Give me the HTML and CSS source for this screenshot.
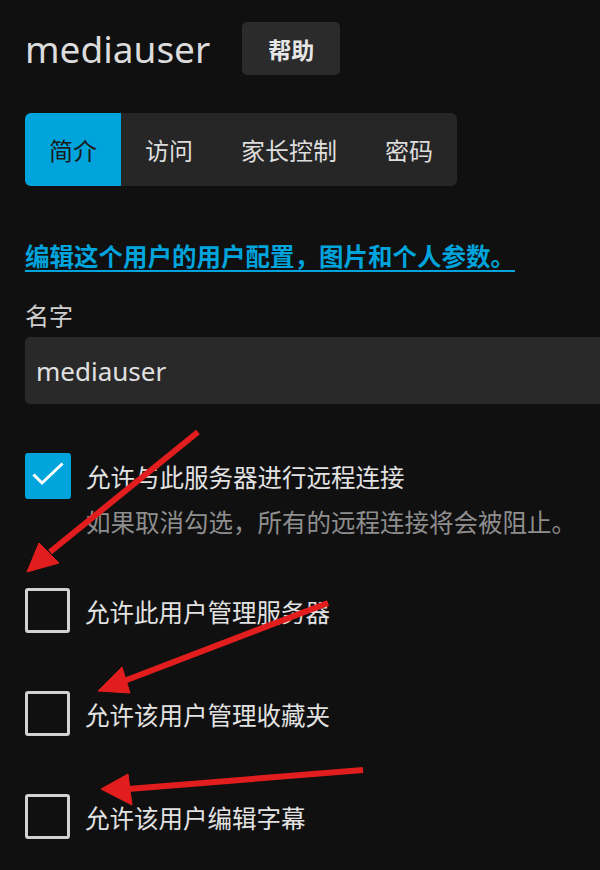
FILE: index.html
```html
<!DOCTYPE html>
<html lang="zh-CN">
<head>
<meta charset="utf-8">
<title>mediauser</title>
<link rel="stylesheet" href="styles.css">
</head>
<body>
<div class="page">
  <div class="header">
    <h1 class="title">mediauser</h1>
    <button class="help-btn">帮助</button>
  </div>
  <div class="tabs">
    <div class="tab active">简介</div>
    <div class="tab">访问</div>
    <div class="tab">家长控制</div>
    <div class="tab">密码</div>
  </div>
  <a class="profile-link" href="#">编辑这个用户的用户配置，图片和个人参数。</a>
  <div class="field-label">名字</div>
  <div class="input">mediauser</div>

  <div class="check-row first">
    <span class="box checked">
      <svg width="46" height="46" viewBox="0 0 46 46"><path d="M9.5 22.5 L17 30 L36.5 11.5" fill="none" stroke="#fff" stroke-width="3" stroke-linecap="square"/></svg>
    </span>
    <span class="check-label">允许与此服务器进行远程连接</span>
  </div>
  <div class="desc">如果取消勾选，所有的远程连接将会被阻止。</div>

  <div class="check-row second">
    <span class="box"></span>
    <span class="check-label">允许此用户管理服务器</span>
  </div>
  <div class="check-row">
    <span class="box"></span>
    <span class="check-label">允许该用户管理收藏夹</span>
  </div>
  <div class="check-row">
    <span class="box"></span>
    <span class="check-label">允许该用户编辑字幕</span>
  </div>
</div>

<svg class="arrows" width="600" height="870" viewBox="0 0 600 870">
  <g fill="#e21d1d" stroke="#e21d1d">
    <line x1="198" y1="432" x2="50" y2="552" stroke-width="6"/>
    <polygon points="27,572 39,543 59,563" stroke-width="1"/>
    <line x1="328" y1="603" x2="124" y2="681" stroke-width="6"/>
    <polygon points="98,691 122,667 130,693" stroke-width="1"/>
    <line x1="363" y1="770" x2="128" y2="789" stroke-width="6"/>
    <polygon points="101,789 128,774 132,805" stroke-width="1"/>
  </g>
</svg>
</body>
</html>
```
FILE: styles.css
```css
html, body {
  margin: 0;
  padding: 0;
  background: #101010;
  overflow: hidden;
}
body {
  width: 600px;
  height: 870px;
  position: relative;
  font-family: "Noto Sans", "Noto Sans CJK SC", sans-serif;
  color: #e0e0e0;
}
.page {
  padding-left: 25px;
}
.header {
  display: flex;
  align-items: center;
  gap: 32px;
  padding-top: 22px;
  height: 53px;
}
.title {
  margin: 0;
  font-weight: 400;
  font-size: 37px;
  line-height: 53px;
  color: #dcdcdc;
}
.help-btn {
  width: 98px;
  height: 53px;
  border: none;
  border-radius: 5px;
  background: #2b2b2b;
  color: #e6e6e6;
  font-family: "Noto Sans CJK SC", sans-serif;
  font-weight: 700;
  font-size: 23px;
  padding: 0;
}
.tabs {
  display: inline-flex;
  margin-top: 38px;
  height: 73px;
  background: #262626;
  border-radius: 6px;
  overflow: hidden;
}
.tab {
  display: flex;
  align-items: center;
  padding: 0 24px;
  font-size: 24px;
  color: #dddddd;
}
.tab.active {
  background: #00a4dc;
  color: #1a1a1a;
}
.profile-link {
  display: block;
  width: max-content;
  margin-top: 56px;
  font-size: 24.5px;
  line-height: 30px;
  font-weight: 700;
  color: #00a4dc;
  text-decoration: underline;
  text-underline-offset: 4px;
  text-decoration-thickness: 2px;
}
.field-label {
  margin-top: 29px;
  font-size: 24px;
  line-height: 30px;
  color: #cfcfcf;
}
.input {
  margin-top: 6px;
  width: 575px;
  height: 67px;
  box-sizing: border-box;
  padding-left: 11px;
  display: flex;
  align-items: center;
  background: #292929;
  border-radius: 5px 0 0 5px;
  font-size: 26px;
  color: #e0e0e0;
}
.check-row {
  display: flex;
  align-items: center;
  gap: 15px;
  margin-top: 58px;
  height: 45px;
}
.check-row.first {
  margin-top: 49px;
  height: 46px;
}
.check-row.second {
  margin-top: 50px;
}
.box {
  width: 45px;
  height: 45px;
  box-sizing: border-box;
  border: 3px solid #d2d2d2;
  border-radius: 3px;
  flex: none;
}
.box.checked {
  width: 46px;
  height: 46px;
  border: none;
  background: #00a4dc;
}
.box.checked svg {
  display: block;
}
.check-label {
  padding-top: 4px;
  font-size: 24.5px;
  line-height: 30px;
  color: #e2e2e2;
}
.desc {
  margin-top: 9px;
  padding-left: 61px;
  font-size: 24.5px;
  line-height: 30px;
  color: #8e8e8e;
}
.arrows {
  position: absolute;
  left: 0;
  top: 0;
  pointer-events: none;
}
```
